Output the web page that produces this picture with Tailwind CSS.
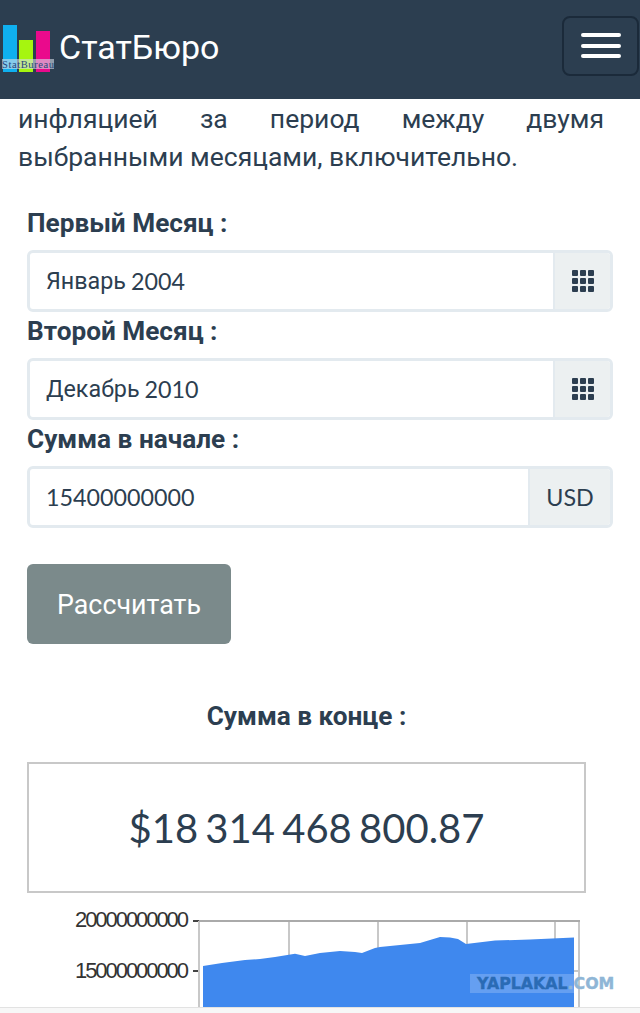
<!DOCTYPE html>
<html lang="ru">
<head>
  <meta charset="UTF-8">
  <meta name="viewport" content="width=device-width, initial-scale=1.0">
  <title>СтатБюро</title>
  <script src="https://cdn.jsdelivr.net/npm/@tailwindcss/browser@4"></script>
</head>
<body class="relative h-[1013px] overflow-hidden bg-white font-['Roboto',sans-serif] text-[#2c3e50]">

  <!-- Navbar -->
  <nav class="flex h-[99px] items-center justify-between bg-[#2c3e50] pl-[2px] pr-[1px]">
    <div class="flex items-center gap-[5px]">
      <svg class="h-[50px] w-[52px]" viewBox="0 0 52 50">
        <rect x="1" y="0" width="14" height="47" fill="#0fb0f0"/>
        <rect x="17" y="15" width="14" height="32" fill="#a6f50f"/>
        <rect x="34" y="6" width="14" height="41" fill="#ea0a8c"/>
        <rect x="0" y="34" width="52" height="10" fill="#d5dde8" fill-opacity="0.6"/>
        <text x="0" y="43" font-family="Liberation Serif" font-size="10.5" textLength="52" fill="#27457a">StatBureau</text>
      </svg>
      <span class="mb-[5px] text-[34px] leading-none text-white">СтатБюро</span>
    </div>
    <button class="mt-[-8px] flex h-[60px] w-[77px] flex-col items-center justify-center gap-[6.5px] rounded-lg border-2 border-[#1b2a3a]">
      <span class="h-[4px] w-[40px] rounded-sm bg-white"></span>
      <span class="h-[4px] w-[40px] rounded-sm bg-white"></span>
      <span class="h-[4px] w-[40px] rounded-sm bg-white"></span>
    </button>
  </nav>

  <!-- Intro -->
  <p class="ml-[18px] w-[586px] pt-[1px] text-justify text-[26.5px] leading-[38px]">инфляцией за период между двумя выбранными месяцами, включительно.</p>

  <!-- Form -->
  <form class="ml-[27px] mt-[31px] w-[586px]">
    <label class="block text-[26.2px] font-bold leading-[32px]">Первый Месяц :</label>
    <div class="mt-[11px] flex h-[62px] overflow-hidden rounded-md border-[3px] border-[#e3eaef]">
      <div class="flex flex-1 items-center gap-[5px] pl-[16px] text-[23.3px]">Январь <span class="font-['Lato']">2004</span></div>
      <div class="flex w-[57px] items-center justify-center border-l-[2px] border-[#e3eaef] bg-[#ecf0f1]">
        <svg class="h-[22px] w-[22px]" viewBox="0 0 22 22" fill="#2c3e50">
          <rect width="6" height="6" rx="1"/><rect x="8" width="6" height="6" rx="1"/><rect x="16" width="6" height="6" rx="1"/>
          <rect y="8" width="6" height="6" rx="1"/><rect x="8" y="8" width="6" height="6" rx="1"/><rect x="16" y="8" width="6" height="6" rx="1"/>
          <rect y="16" width="6" height="6" rx="1"/><rect x="8" y="16" width="6" height="6" rx="1"/><rect x="16" y="16" width="6" height="6" rx="1"/>
        </svg>
      </div>
    </div>
    <label class="mt-[3px] block text-[26.2px] font-bold leading-[32px]">Второй Месяц :</label>
    <div class="mt-[11px] flex h-[62px] overflow-hidden rounded-md border-[3px] border-[#e3eaef]">
      <div class="flex flex-1 items-center gap-[5px] pl-[16px] text-[23.3px]">Декабрь <span class="font-['Lato']">2010</span></div>
      <div class="flex w-[57px] items-center justify-center border-l-[2px] border-[#e3eaef] bg-[#ecf0f1]">
        <svg class="h-[22px] w-[22px]" viewBox="0 0 22 22" fill="#2c3e50">
          <rect width="6" height="6" rx="1"/><rect x="8" width="6" height="6" rx="1"/><rect x="16" width="6" height="6" rx="1"/>
          <rect y="8" width="6" height="6" rx="1"/><rect x="8" y="8" width="6" height="6" rx="1"/><rect x="16" y="8" width="6" height="6" rx="1"/>
          <rect y="16" width="6" height="6" rx="1"/><rect x="8" y="16" width="6" height="6" rx="1"/><rect x="16" y="16" width="6" height="6" rx="1"/>
        </svg>
      </div>
    </div>
    <label class="mt-[3px] block text-[26.2px] font-bold leading-[32px]">Сумма в начале :</label>
    <div class="mt-[11px] flex h-[62px] overflow-hidden rounded-md border-[3px] border-[#e3eaef]">
      <div class="flex flex-1 items-center pl-[16px] font-['Lato'] text-[23.3px]">15400000000</div>
      <div class="flex w-[82px] items-center justify-center border-l-[2px] border-[#e3eaef] bg-[#ecf0f1] font-['Lato'] text-[23.3px]">USD</div>
    </div>
    <button class="mt-[36px] block h-[80px] w-[204px] rounded-md bg-[#7b8a8b] pt-[3px] text-[26.8px] text-white">Рассчитать</button>
  </form>

  <!-- Result -->
  <div class="ml-[27px] mt-[56px] w-[559px]">
    <h3 class="text-center text-[26.2px] font-bold leading-[32px]">Сумма в конце :</h3>
    <div class="mt-[30px] flex h-[131px] items-center justify-center border-2 border-[#c8c8c8] font-['Lato'] text-[40px] [word-spacing:-3px]">$18 314 468 800.87</div>
  </div>

  <!-- Chart -->
  <svg class="block h-[116px] w-[640px]" viewBox="0 0 640 116">
    <g font-family="Liberation Sans" font-size="22" fill="#333" text-anchor="end">
      <text x="189" y="34" textLength="114">20000000000</text>
      <text x="189" y="85" textLength="114">15000000000</text>
    </g>
    <path d="M193 28H199M193 78H199" stroke="#444" stroke-width="2"/>
    <path d="M199 28V116M289 28V116M378 28V116M467 28V116M555 28V116M579 28V116M573 78H579" stroke="#c8c8c8" stroke-width="2" fill="none"/>
    <path d="M199 28H580" stroke="#aaa" stroke-width="2"/>
    <path d="M203 73L222 70L245 67L260 66L275 64L295 60.7L305 63L320 60L340 58L355 59L362 60L375 55L380 54L400 52L420 50L440 44L450 44.5L458 46L466 51L495 47.5L530 46.5L574 44.5V116H203Z" fill="#3f88ee"/>
  </svg>

  <!-- Watermark -->
  <div class="absolute left-[470px] top-[974px] h-[19px] w-[104px] bg-white/20"></div>
  <span class="absolute left-[477px] top-[974px] font-['DejaVu_Sans'] text-[15.8px] font-bold leading-[19px] text-[#2a6bb5] [-webkit-text-stroke:0.4px_#2a6bb5]">YAPLAKAL<span class="text-[#8fb6d6] [-webkit-text-stroke:0.4px_#8fb6d6]">.COM</span></span>

  <!-- Browser strip -->
  <div class="absolute bottom-0 left-0 h-[6px] w-full border-t border-[#e2e2e2] bg-[#f7f7f7]"></div>
</body>
</html>
